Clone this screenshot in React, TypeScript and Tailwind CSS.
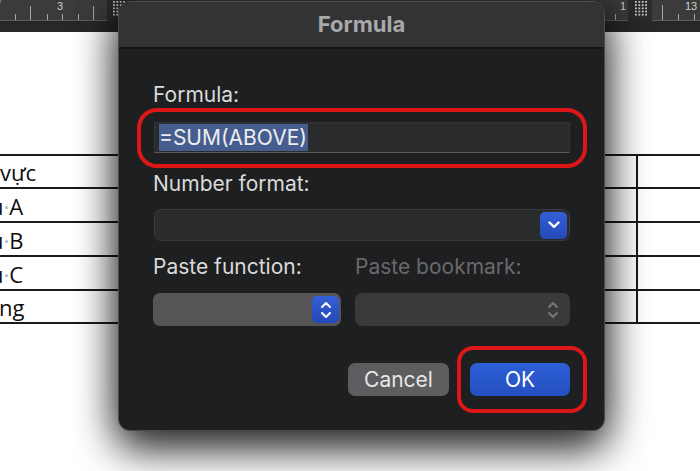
import React from "react";

function Dots({ x }: { x: number }) {
  const dots: React.ReactNode[] = [];
  for (let r = 0; r < 5; r++) {
    for (let c = 0; c < 4; c++) {
      dots.push(
        <rect key={`${r}-${c}`} x={x + c * 3.4} y={1 + r * 3.2} width={1.8} height={1.8} fill="#c8c8c8" />
      );
    }
  }
  return <>{dots}</>;
}

function Ruler() {
  const tick = "#a5a5a5";
  return (
    <svg width="700" height="21" className="block">
      <rect x="0" y="0" width="700" height="21" fill="#3b3b3b" />
      <rect x="0" y="20" width="107" height="1" fill="#5e5e5e" />
      <rect x="604" y="20" width="24" height="1" fill="#5e5e5e" />
      <rect x="652" y="20" width="48" height="1" fill="#5e5e5e" />
      <line x1="0" y1="0" x2="0" y2="3" stroke={tick} />
      <line x1="15.5" y1="14" x2="15.5" y2="20" stroke={tick} />
      <line x1="30.5" y1="6" x2="30.5" y2="20" stroke={tick} />
      <line x1="47.5" y1="14" x2="47.5" y2="20" stroke={tick} />
      <line x1="62.5" y1="14" x2="62.5" y2="20" stroke={tick} />
      <line x1="78.5" y1="14" x2="78.5" y2="20" stroke={tick} />
      <line x1="93.5" y1="6" x2="93.5" y2="20" stroke={tick} />
      <text x="57" y="10" fontSize="11" fill="#cfcfcf" fontFamily="Liberation Sans, sans-serif">3</text>
      <rect x="107" y="0" width="30" height="21" fill="#2b2b2b" />
      <Dots x={113} />
      <line x1="615.5" y1="14" x2="615.5" y2="20" stroke={tick} />
      <text x="620" y="10" fontSize="11" fill="#cfcfcf" fontFamily="Liberation Sans, sans-serif">1</text>
      <rect x="628" y="0" width="24" height="21" fill="#2b2b2b" />
      <Dots x={635} />
      <line x1="662.5" y1="5" x2="662.5" y2="20" stroke={tick} />
      <line x1="678.5" y1="14" x2="678.5" y2="20" stroke={tick} />
      <line x1="694.5" y1="14" x2="694.5" y2="20" stroke={tick} />
      <text x="685" y="10" fontSize="11" fill="#cfcfcf" fontFamily="Liberation Sans, sans-serif">13</text>
    </svg>
  );
}

function ChevronDown() {
  return (
    <svg width="12" height="8" viewBox="0 0 12 8">
      <path d="M1.5 1.5 L6 6 L10.5 1.5" fill="none" stroke="white" strokeWidth="2.4" strokeLinecap="round" strokeLinejoin="round" />
    </svg>
  );
}

function Stepper({ color }: { color: string }) {
  return (
    <svg width="12" height="20" viewBox="0 0 12 20">
      <path d="M2 7 L6 3 L10 7" fill="none" stroke={color} strokeWidth="2" strokeLinecap="round" strokeLinejoin="round" />
      <path d="M2 13 L6 17 L10 13" fill="none" stroke={color} strokeWidth="2" strokeLinecap="round" strokeLinejoin="round" />
    </svg>
  );
}

const rows = [
  { h: "h-[33px]", content: <span className="ml-[0px]">vực</span> },
  { h: "h-[34px]", label: "A" },
  { h: "h-[34px]", label: "B" },
  { h: "h-[34px]", label: "C" },
  { h: "h-[33px]", content: <span className="ml-[-1px]">ng</span> },
];

export default function App() {
  return (
    <div className="relative w-[700px] h-[471px] overflow-hidden bg-white font-[Inter,sans-serif]">
      <Ruler />
      <div className="h-[11px] bg-[#282828]" />
      <div className="flex">
        <div className="w-[118px] pt-[122px] font-['Open_Sans',sans-serif] text-[22px] text-[#0e0e0e]">
          {rows.map((r, i) => (
            <div key={i} className={`${r.h} border-t-2 border-[#1a1a1a] flex items-end pb-[1px] leading-[27px] whitespace-nowrap overflow-hidden`}>
              {r.content ?? (
                <span className="ml-[-10px]">
                  u<span className="text-[#8fb8d8]">·</span>
                  {r.label}
                </span>
              )}
            </div>
          ))}
          <div className="border-t-2 border-[#1a1a1a]" />
        </div>
        <div className="flex-1" />
        <div className="w-[96px] pt-[122px]">
          {rows.map((r, i) => (
            <div key={i} className={`${r.h} border-t-2 border-[#1a1a1a] flex`}>
              <div className="w-[34px] border-r-2 border-[#1a1a1a]" />
              <div className="flex-1" />
            </div>
          ))}
          <div className="border-t-2 border-[#1a1a1a]" />
        </div>
      </div>

      <div className="absolute left-[118px] top-[1px] w-[487px] h-[430px] rounded-[12px] bg-[#1e1f21] border border-[#4b4b4d] shadow-[0_18px_42px_rgba(0,0,0,0.8),0_0_40px_rgba(0,0,0,0.4)] overflow-hidden flex flex-col">
        <div className="h-[47px] shrink-0 bg-[#333335] border-b-2 border-[#141416] flex items-center justify-center text-[22px] font-bold text-[#a9a9ab]">
          Formula
        </div>
        <div className="flex flex-col pl-[34px] pr-[34px] pt-[33px] text-[21px] leading-[26px]">
          <div className="text-[#dadada]">Formula:</div>
          <div className="mt-[14px] ml-[1px] h-[31px] bg-[#2a2b2d] border border-[#333436] border-b-[#58595b] flex items-center pl-[4px]">
            <span className="bg-[#465e8f] text-[#eeeeee] h-[27px] leading-[27px] pr-[1px]">=SUM(ABOVE)</span>
          </div>
          <div className="mt-[18px] text-[#dadada]">Number format:</div>
          <div className="mt-[12px] ml-[1px] h-[32px] rounded-[7px] bg-[#2a2b2d] border border-[#3a3b3d] flex items-center justify-end pr-[2px]">
            <div className="w-[27px] h-[27px] rounded-[5px] bg-gradient-to-b from-[#3660d6] to-[#2448b8] flex items-center justify-center">
              <ChevronDown />
            </div>
          </div>
          <div className="mt-[13px] grid grid-cols-[188px_1fr] gap-x-[14px]">
            <div className="text-[#dadada]">Paste function:</div>
            <div className="text-[#69696b]">Paste bookmark:</div>
            <div className="mt-[13px] h-[33px] rounded-[7px] bg-[#555557] flex items-center justify-end pr-[2px]">
              <div className="w-[27px] h-[27px] rounded-[5px] bg-gradient-to-b from-[#3660d6] to-[#2448b8] flex items-center justify-center">
                <Stepper color="white" />
              </div>
            </div>
            <div className="mt-[13px] h-[33px] rounded-[7px] bg-[#3a3a3c] flex items-center justify-end pr-[11px]">
              <Stepper color="#77777a" />
            </div>
          </div>
          <div className="mt-[37px] flex justify-end gap-[21px]">
            <div className="w-[101px] h-[33px] rounded-[7px] bg-[#5d5d5f] text-[#e6e6e6] flex items-center justify-center">
              Cancel
            </div>
            <div className="w-[100px] h-[33px] rounded-[7px] bg-gradient-to-b from-[#2e5fd6] to-[#244fc2] text-white flex items-center justify-center">
              OK
            </div>
          </div>
        </div>
      </div>

      <div className="absolute left-[137px] top-[108px] w-[450px] h-[60px] rounded-[20px] border-4 border-[#dc1717]" />
      <div className="absolute left-[457px] top-[346px] w-[130px] h-[67px] rounded-[16px] border-4 border-[#dc1717]" />
    </div>
  );
}
